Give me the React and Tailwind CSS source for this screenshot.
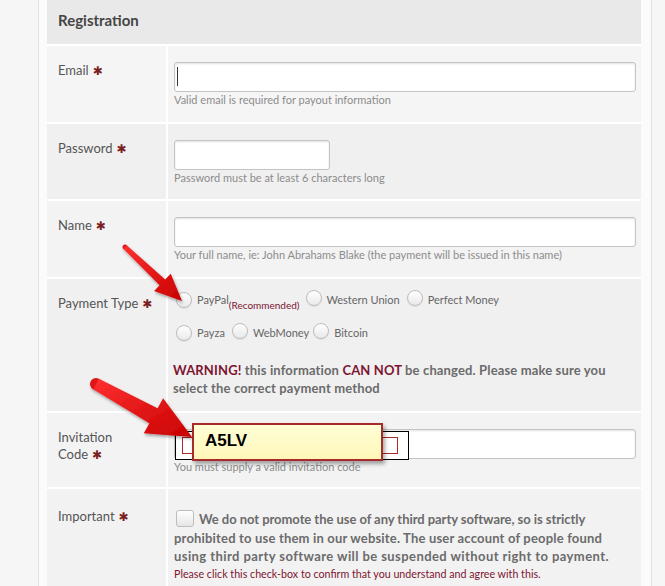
import React from "react";

/* -------- helpers -------- */
function arrowPoints(tx, ty, hx, hy, w0, w1, hw, hl) {
  const dx = hx - tx;
  const dy = hy - ty;
  const len = Math.hypot(dx, dy);
  const ux = dx / len;
  const uy = dy / len;
  const nx = -uy;
  const ny = ux;
  const bx = hx - ux * hl;
  const by = hy - uy * hl;
  const p = [
    [tx + (nx * w0) / 2, ty + (ny * w0) / 2],
    [bx + (nx * w1) / 2, by + (ny * w1) / 2],
    [bx + (nx * hw) / 2, by + (ny * hw) / 2],
    [hx, hy],
    [bx - (nx * hw) / 2, by - (ny * hw) / 2],
    [bx - (nx * w1) / 2, by - (ny * w1) / 2],
    [tx - (nx * w0) / 2, ty - (ny * w0) / 2],
  ];
  return p.map(([x, y]) => `${x.toFixed(1)},${y.toFixed(1)}`).join(" ");
}

const Star = () => (
  <span className="ml-[4px] text-[12px] text-[#7a2020] font-['DejaVu_Sans',sans-serif]">✱</span>
);

const Hint = ({ children }) => (
  <p className="mt-[2px] text-[11px] leading-[12px] text-[#8c8c8c]">{children}</p>
);

const TextInput = ({ className = "", children }) => (
  <div
    className={
      "relative h-[30px] rounded-[3px] border border-[#c4c4c4] bg-white shadow-[inset_0_1px_2px_rgba(0,0,0,0.12)] " +
      className
    }
  >
    {children}
  </div>
);

const Radio = () => (
  <span className="inline-block h-[16px] w-[16px] shrink-0 rounded-full border border-[#bdbdbd] bg-gradient-to-b from-white to-[#e9e9e9] shadow-[0_1px_1px_rgba(0,0,0,0.08)]" />
);

const Row = ({ label, labelClass = "pt-[16px]", className = "", children }) => (
  <div className={"grid grid-cols-[119px_1fr] border-t-2 border-white " + className}>
    <div className={"pl-[11px] text-[13px] leading-[16px] text-[#555] " + labelClass}>{label}</div>
    <div className="border-l-2 border-white pl-[6px] pr-[5px]">{children}</div>
  </div>
);

export default function App() {
  return (
    <div className="relative h-[586px] w-full overflow-hidden bg-[#f6f6f6] font-[Lato,sans-serif]">
      <div className="ml-[38px] h-full w-[614px] border-x border-[#e2e2e2] bg-[#fbfbfb] pl-[8px] pr-[10px]">
        <div className="flex h-full flex-col bg-[#f2f2f2]">
          {/* header */}
          <div className="flex h-[44px] shrink-0 items-center bg-[#e9e9e9] pl-[11px] pb-[3px]">
            <h1 className="text-[15px] font-bold text-[#454545]">Registration</h1>
          </div>

          {/* Email */}
          <Row className="h-[78px] shrink-0 bg-[#f5f5f5]" label={<>Email<Star /></>}>
            <div className="pt-[16px]">
              <TextInput>
                <span className="absolute left-[2px] top-[4px] h-[19px] w-px bg-[#333]" />
              </TextInput>
              <Hint>Valid email is required for payout information</Hint>
            </div>
          </Row>

          {/* Password */}
          <Row className="h-[77px] shrink-0 bg-[#f0f0f0]" label={<>Password<Star /></>}>
            <div className="pt-[16px]">
              <TextInput className="w-[156px]" />
              <Hint>Password must be at least 6 characters long</Hint>
            </div>
          </Row>

          {/* Name */}
          <Row className="h-[78px] shrink-0 bg-[#f3f3f3]" label={<>Name<Star /></>}>
            <div className="pt-[16px]">
              <TextInput />
              <Hint>Your full name, ie: John Abrahams Blake (the payment will be issued in this name)</Hint>
            </div>
          </Row>

          {/* Payment type */}
          <Row className="h-[134px] shrink-0 bg-[#f0f0f0]" label={<>Payment Type<Star /></>}>
            <div className="pt-[11px] pl-[2px] text-[11px] text-[#666]">
              <div className="flex h-[20px] items-center">
                <Radio />
                <span className="ml-[5px] leading-[14px]">PayPal</span>
                <span className="mt-[10px] text-[10px] text-[#7d1530]">(Recommended)</span>
                <span className="ml-[6px]"><Radio /></span>
                <span className="ml-[5px]">Western Union</span>
                <span className="ml-[7px]"><Radio /></span>
                <span className="ml-[5px]">Perfect Money</span>
              </div>
              <div className="mt-[13px] flex h-[20px] items-center">
                <Radio />
                <span className="ml-[5px]">Payza</span>
                <span className="ml-[7px]"><Radio /></span>
                <span className="ml-[5px]">WebMoney</span>
                <span className="ml-[4px]"><Radio /></span>
                <span className="ml-[5px]">Bitcoin</span>
              </div>
              <p className="mt-[18px] -ml-[3px] whitespace-nowrap text-[13px] font-bold leading-[18px] tracking-[0.14px] text-[#6b6b6b]">
                <span className="text-[#7d1530]">WARNING!</span> this information{" "}
                <span className="text-[#7d1530]">CAN NOT</span> be changed. Please make sure you
                <br />
                select the correct payment method
              </p>
            </div>
          </Row>

          {/* Invitation code */}
          <Row
            className="h-[76px] shrink-0 bg-[#f3f3f3]"
            labelClass="pt-[16px] leading-[17px]"
            label={
              <>
                Invitation
                <br />
                Code<Star />
              </>
            }
          >
            <div className="pt-[16px]">
              <TextInput>
                {/* captcha image behind the overlay */}
                <div className="absolute left-[0px] top-[1px] h-[29px] w-[234px] border border-black bg-white">
                  <div className="absolute left-[6px] top-[5px] h-[17px] w-[216px] border border-[#b02828]" />
                </div>
                {/* yellow code box */}
                <div className="absolute left-[17px] top-[-7px] flex h-[38px] w-[191px] items-center border-2 border-[#a82b2b] bg-gradient-to-b from-[#ffffd6] to-[#fff6b8] pl-[11px] pb-[3px] shadow-[2px_3px_4px_rgba(0,0,0,0.35)]">
                  <span className="font-['Liberation_Sans',sans-serif] text-[17px] font-bold text-black">A5LV</span>
                </div>
              </TextInput>
              <Hint>You must supply a valid invitation code</Hint>
            </div>
          </Row>

          {/* Important */}
          <Row
            className="flex-1 bg-[#f2f2f2]"
            labelClass="pt-[19px]"
            label={<>Important<Star /></>}
          >
            <div className="pt-[18px]">
              <p className="whitespace-nowrap text-[13px] font-bold leading-[18.5px] text-[#6b6b6b]">
                <span className="mr-[5px] ml-[2px] inline-block h-[17px] w-[18px] translate-y-[3px] rounded-[3px] border border-[#bdbdbd] bg-gradient-to-b from-white to-[#e6e6e6]" />
                <span className="tracking-[-0.05px]">We do not promote the use of any third party software, so is strictly</span>
                <br />
                <span className="tracking-[0.18px]">prohibited to use them in our website. The user account of people found</span>
                <br />
                <span className="tracking-[0.42px]">using third party software will be suspended without right to payment.</span>
              </p>
              <p className="mt-[1px] text-[10.7px] leading-[14px] text-[#7d1530]">
                Please click this check-box to confirm that you understand and agree with this.
              </p>
            </div>
          </Row>
        </div>
      </div>

      {/* red arrows */}
      <svg className="pointer-events-none absolute left-0 top-0" width="665" height="586">
        <defs>
          <linearGradient id="red" x1="0" y1="0" x2="1" y2="1">
            <stop offset="0" stopColor="#ff3030" />
            <stop offset="1" stopColor="#c80000" />
          </linearGradient>
          <filter id="sh" x="-20%" y="-20%" width="140%" height="140%">
            <feDropShadow dx="1" dy="2" stdDeviation="1.5" floodColor="#000" floodOpacity="0.35" />
          </filter>
        </defs>
        <g filter="url(#sh)">
          <circle cx="125" cy="247" r="2.5" fill="#e01515" />
          <polygon points={arrowPoints(125, 247, 182, 301, 5, 8, 24, 27)} fill="url(#red)" />
        </g>
        <g filter="url(#sh)">
          <circle cx="96" cy="384" r="6" fill="#e01515" />
          <polygon points={arrowPoints(96, 384, 192, 437, 12, 17, 40, 44)} fill="url(#red)" />
        </g>
      </svg>
    </div>
  );
}
